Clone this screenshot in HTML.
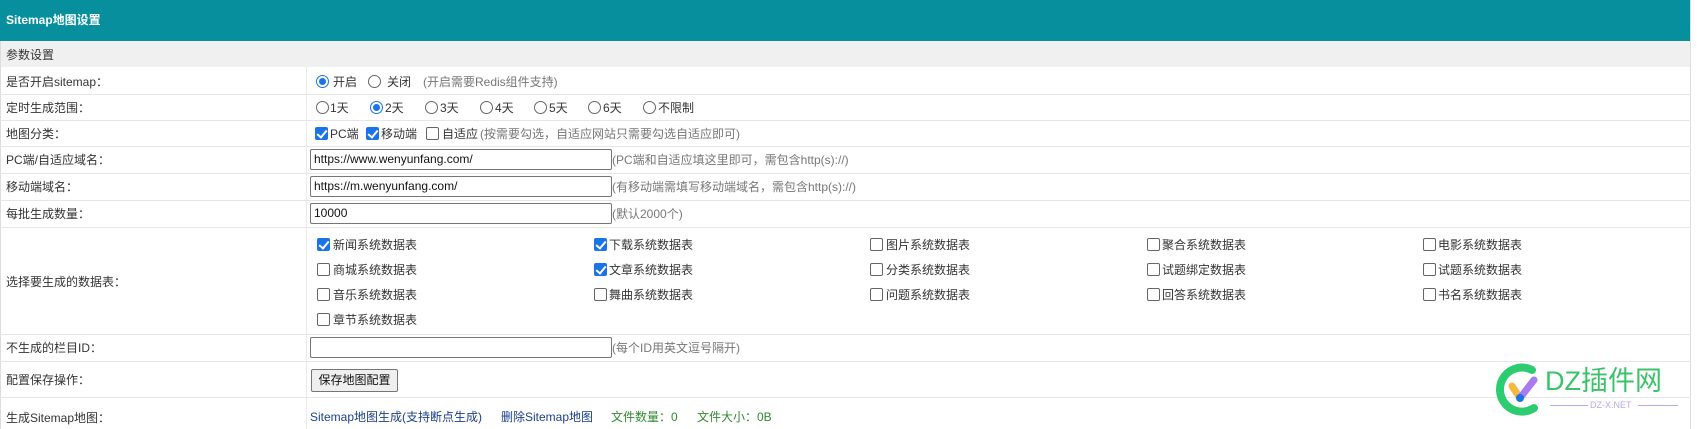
<!DOCTYPE html>
<html><head><meta charset="utf-8"><style>
*{margin:0;padding:0;box-sizing:border-box}
body{width:1697px;height:429px;background:#fff;font-family:"Liberation Sans","Noto Sans CJK SC",sans-serif;font-size:12px;color:#333;position:relative;overflow:hidden}
.a{position:absolute;white-space:nowrap;line-height:16px}
.hl{position:absolute;left:0;width:1691px;height:1px;background:#e6e6e6}
.rb{position:absolute;width:13px;height:13px;border:1px solid #666;border-radius:50%;background:#fff}
.rb.on{border:1px solid #1a73e8}
.rb.on:after{content:"";position:absolute;left:2px;top:2px;width:7px;height:7px;border-radius:50%;background:#1a73e8}
.cb{position:absolute;width:13px;height:13px;border:1px solid #666;border-radius:2px;background:#fff}
.cb.on{background:#1a73e8;border-color:#1a73e8}
.cb.on:after{content:"";position:absolute;left:3px;top:0px;width:4px;height:8px;border:solid #fff;border-width:0 2px 2px 0;transform:rotate(40deg)}
.in{position:absolute;left:310px;width:302px;height:21px;border:1px solid #767676;border-radius:2px;padding-left:3px;line-height:19px;color:#111}
.g{color:#777}
</style></head><body>
<div style="position:absolute;left:0;top:0;width:1691px;height:41px;background:#078f9d"></div>
<div class="a" style="left:6px;top:12px;color:#fff;font-weight:bold">Sitemap地图设置</div>
<div style="position:absolute;left:0;top:41px;width:1691px;height:26px;background:#f0f0f0"></div>
<div class="a" style="left:6px;top:47px">参数设置</div>
<div style="position:absolute;left:1690px;top:0;width:1px;height:429px;background:#ddd"></div>
<div style="position:absolute;left:0;top:41px;width:1px;height:388px;background:#ddd"></div>
<div style="position:absolute;left:306px;top:67px;width:1px;height:362px;background:#eaeaea"></div>
<div class="hl" style="top:94px"></div><div class="hl" style="top:120px"></div><div class="hl" style="top:146px"></div><div class="hl" style="top:173px"></div><div class="hl" style="top:200px"></div><div class="hl" style="top:227px"></div><div class="hl" style="top:334px"></div><div class="hl" style="top:361px"></div><div class="hl" style="top:397px"></div>

<div class="a" style="left:6px;top:74px">是否开启sitemap：</div>
<div class="rb on" style="left:316px;top:75px"></div><div class="a" style="left:333px;top:74px">开启</div>
<div class="rb" style="left:368px;top:75px"></div><div class="a" style="left:387px;top:74px">关闭</div>
<div class="a g" style="left:423px;top:74px">(开启需要Redis组件支持)</div>

<div class="a" style="left:6px;top:100px">定时生成范围：</div>
<div class="rb" style="left:316px;top:101px"></div><div class="a" style="left:330px;top:100px">1天</div>
<div class="rb on" style="left:370px;top:101px"></div><div class="a" style="left:385px;top:100px">2天</div>
<div class="rb" style="left:425px;top:101px"></div><div class="a" style="left:440px;top:100px">3天</div>
<div class="rb" style="left:480px;top:101px"></div><div class="a" style="left:495px;top:100px">4天</div>
<div class="rb" style="left:534px;top:101px"></div><div class="a" style="left:549px;top:100px">5天</div>
<div class="rb" style="left:588px;top:101px"></div><div class="a" style="left:603px;top:100px">6天</div>
<div class="rb" style="left:643px;top:101px"></div><div class="a" style="left:658px;top:100px">不限制</div>

<div class="a" style="left:6px;top:126px">地图分类：</div>
<div class="cb on" style="left:315px;top:127px"></div><div class="a" style="left:330px;top:126px">PC端</div>
<div class="cb on" style="left:366px;top:127px"></div><div class="a" style="left:381px;top:126px">移动端</div>
<div class="cb" style="left:426px;top:127px"></div><div class="a" style="left:442px;top:126px">自适应</div>
<div class="a g" style="left:480px;top:126px">(按需要勾选，自适应网站只需要勾选自适应即可)</div>

<div class="a" style="left:6px;top:152px">PC端/自适应域名：</div>
<div class="in" style="top:149px">https://www.wenyunfang.com/</div>
<div class="a g" style="left:612px;top:152px">(PC端和自适应填这里即可，需包含http(s)://)</div>

<div class="a" style="left:6px;top:179px">移动端域名：</div>
<div class="in" style="top:176px">https://m.wenyunfang.com/</div>
<div class="a g" style="left:612px;top:179px">(有移动端需填写移动端域名，需包含http(s)://)</div>

<div class="a" style="left:6px;top:206px">每批生成数量：</div>
<div class="in" style="top:203px">10000</div>
<div class="a g" style="left:612px;top:206px">(默认2000个)</div>

<div class="a" style="left:6px;top:274px">选择要生成的数据表：</div>
<div class="cb on" style="left:317px;top:238px"></div><div class="a" style="left:333px;top:237px">新闻系统数据表</div>
<div class="cb on" style="left:594px;top:238px"></div><div class="a" style="left:609px;top:237px">下载系统数据表</div>
<div class="cb" style="left:870px;top:238px"></div><div class="a" style="left:886px;top:237px">图片系统数据表</div>
<div class="cb" style="left:1147px;top:238px"></div><div class="a" style="left:1162px;top:237px">聚合系统数据表</div>
<div class="cb" style="left:1423px;top:238px"></div><div class="a" style="left:1438px;top:237px">电影系统数据表</div>
<div class="cb" style="left:317px;top:263px"></div><div class="a" style="left:333px;top:262px">商城系统数据表</div>
<div class="cb on" style="left:594px;top:263px"></div><div class="a" style="left:609px;top:262px">文章系统数据表</div>
<div class="cb" style="left:870px;top:263px"></div><div class="a" style="left:886px;top:262px">分类系统数据表</div>
<div class="cb" style="left:1147px;top:263px"></div><div class="a" style="left:1162px;top:262px">试题绑定数据表</div>
<div class="cb" style="left:1423px;top:263px"></div><div class="a" style="left:1438px;top:262px">试题系统数据表</div>
<div class="cb" style="left:317px;top:288px"></div><div class="a" style="left:333px;top:287px">音乐系统数据表</div>
<div class="cb" style="left:594px;top:288px"></div><div class="a" style="left:609px;top:287px">舞曲系统数据表</div>
<div class="cb" style="left:870px;top:288px"></div><div class="a" style="left:886px;top:287px">问题系统数据表</div>
<div class="cb" style="left:1147px;top:288px"></div><div class="a" style="left:1162px;top:287px">回答系统数据表</div>
<div class="cb" style="left:1423px;top:288px"></div><div class="a" style="left:1438px;top:287px">书名系统数据表</div>
<div class="cb" style="left:317px;top:313px"></div><div class="a" style="left:333px;top:312px">章节系统数据表</div>

<div class="a" style="left:6px;top:340px">不生成的栏目ID：</div>
<div class="in" style="top:337px"></div>
<div class="a g" style="left:612px;top:340px">(每个ID用英文逗号隔开)</div>

<div class="a" style="left:6px;top:372px">配置保存操作：</div>
<div style="position:absolute;left:311px;top:369px;width:87px;height:23px;border:1px solid #767676;border-radius:2px;background:#efefef;text-align:center;line-height:21px;color:#111">保存地图配置</div>

<div class="a" style="left:6px;top:410px">生成Sitemap地图：</div>
<div class="a" style="left:310px;top:409px;color:#1c3f8c">Sitemap地图生成(支持断点生成)</div>
<div class="a" style="left:501px;top:409px;color:#1c3f8c">删除Sitemap地图</div>
<div class="a" style="left:611px;top:409px;color:#2f8a2f">文件数量：0</div>
<div class="a" style="left:697px;top:409px;color:#2f8a2f">文件大小：0B</div>

<svg style="position:absolute;left:1490px;top:360px" width="60" height="60" viewBox="0 0 60 60">
<path d="M42 10 A22 22 0 1 0 44 48" fill="none" stroke="#2ecc71" stroke-width="8" stroke-linecap="round"/>
<line x1="22" y1="26" x2="30" y2="38" stroke="#f5b942" stroke-width="7" stroke-linecap="round"/>
<line x1="30" y1="38" x2="44" y2="20" stroke="#a77cf0" stroke-width="7" stroke-linecap="round"/>
<circle cx="30" cy="38" r="4" fill="#1a73e8"/>
</svg>
<div class="a" style="left:1545px;top:366px;font-size:27px;line-height:30px;color:#3cc36a">DZ插件网</div>
<div style="position:absolute;left:1550px;top:405px;width:38px;height:1px;background:#b9a9e8"></div>
<div class="a" style="left:1590px;top:399px;font-size:9px;line-height:12px;color:#b9a9e8">DZ-X.NET</div>
<div style="position:absolute;left:1638px;top:405px;width:40px;height:1px;background:#b9a9e8"></div>
</body></html>
